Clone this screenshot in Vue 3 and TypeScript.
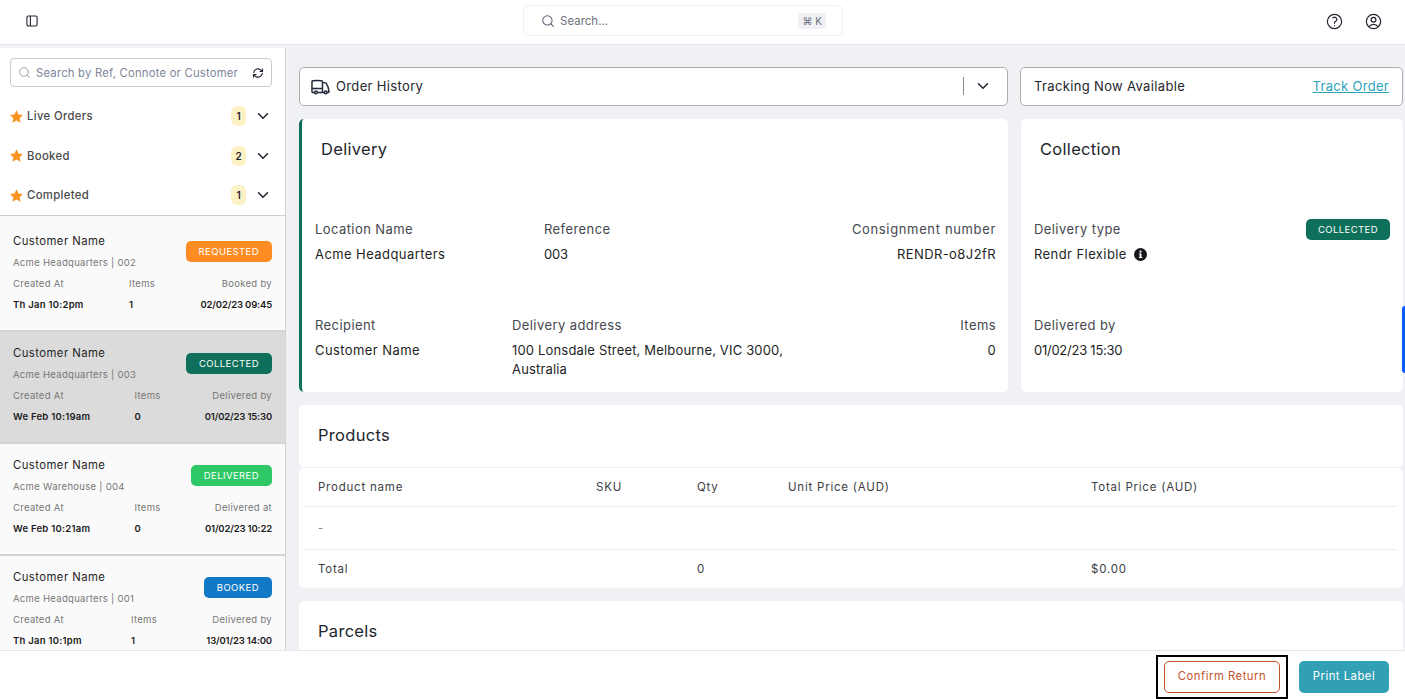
<template>
  <div class="page">
    <header class="topbar">
      <button class="panel-btn" aria-label="Toggle sidebar">
        <svg width="12" height="12" viewBox="0 0 12 12" fill="none" stroke="#1f2430" stroke-width="1.1">
          <rect x="0.9" y="1" width="10.2" height="10" rx="1.4" />
          <path d="M4.4 1v10" />
        </svg>
      </button>
      <div class="global-search">
        <svg class="global-search-icon" width="14" height="14" viewBox="0 0 24 24" fill="none" stroke="#5b6270" stroke-width="1.8" stroke-linecap="round">
          <circle cx="11" cy="11" r="8" />
          <path d="M17 17l4.5 4.5" />
        </svg>
        <span class="global-search-text">Search...</span>
        <span class="kbd">⌘ K</span>
      </div>
      <div class="top-icons">
        <svg width="19" height="19" viewBox="0 0 24 24" fill="none" stroke="#1f2430" stroke-width="1.5" stroke-linecap="round" stroke-linejoin="round">
          <path d="M9.879 7.519c1.171-1.025 3.071-1.025 4.242 0 1.172 1.025 1.172 2.687 0 3.712-.203.179-.43.326-.67.442-.745.361-1.45.999-1.45 1.827v.75M21 12a9 9 0 11-18 0 9 9 0 0118 0zm-9 5.25h.008v.008H12v-.008z" />
        </svg>
        <svg width="19" height="19" viewBox="0 0 24 24" fill="none" stroke="#1f2430" stroke-width="1.5" stroke-linecap="round" stroke-linejoin="round">
          <path d="M17.982 18.725A7.488 7.488 0 0012 15.75a7.488 7.488 0 00-5.982 2.975m11.963 0a9 9 0 10-11.963 0m11.963 0A8.966 8.966 0 0112 21a8.966 8.966 0 01-5.982-2.275M15 9.75a3 3 0 11-6 0 3 3 0 016 0z" />
        </svg>
      </div>
    </header>

    <div class="body">
      <aside class="sidebar">
        <div class="side-search">
          <svg width="13" height="13" viewBox="0 0 24 24" fill="none" stroke="#9aa0ab" stroke-width="1.8" stroke-linecap="round">
            <circle cx="11" cy="11" r="8" />
            <path d="M17 17l4.5 4.5" />
          </svg>
          <span class="side-search-text">Search by Ref, Connote or Customer</span>
          <svg width="12" height="12" viewBox="0 0 24 24" fill="none" stroke="#1f2430" stroke-width="2.4" stroke-linecap="round" stroke-linejoin="round">
            <path d="M3.5 11A8.5 8.5 0 0 1 18 6.2L20.5 9" />
            <path d="M20.5 13A8.5 8.5 0 0 1 6 17.8L3.5 15" />
            <path d="M21 4v5h-5" />
            <path d="M3 20v-5h5" />
          </svg>
        </div>

        <div class="groups">
          <div v-for="g in groups" :key="g.name" class="group">
            <svg width="13" height="13" viewBox="1 1 22 21" fill="#f7931e">
              <path d="M12 1l3.3 7.200 7.700.9-5.700 5.300 1.600 7.600L12 18.100 5.100 22l1.600-7.600L1 9.100l7.700-.9z" />
            </svg>
            <span class="group-name">{{ g.name }}</span>
            <span class="count">{{ g.count }}</span>
            <svg class="chev" width="12" height="12" viewBox="0 0 24 24" fill="none" stroke="#1f2430" stroke-width="3" stroke-linecap="round" stroke-linejoin="round">
              <path d="M3 7.500l9 9 9-9" />
            </svg>
          </div>
        </div>

        <div class="orders">
          <div v-for="o in orders" :key="o.ref" class="order" :class="{ selected: o.selected }">
            <div class="order-head">
              <div>
                <div class="order-name">{{ o.customer }}</div>
                <div class="order-loc">{{ o.location }} | {{ o.ref }}</div>
              </div>
              <span class="badge" :style="{ background: o.color }">{{ o.status }}</span>
            </div>
            <div class="order-grid">
              <div>
                <div class="order-label">Created At</div>
                <div class="order-value">{{ o.created }}</div>
              </div>
              <div>
                <div class="order-label">Items</div>
                <div class="order-value">{{ o.items }}</div>
              </div>
              <div class="right">
                <div class="order-label">{{ o.dateLabel }}</div>
                <div class="order-value order-date">{{ o.date }}</div>
              </div>
            </div>
          </div>
        </div>
      </aside>

      <main class="main">
        <div class="top-row">
          <div class="box history">
            <svg width="21" height="21" viewBox="0 0 24 24" fill="none" stroke="#1f2937" stroke-width="1.7" stroke-linecap="round" stroke-linejoin="round">
              <path d="M8.250 18.750a1.500 1.500 0 01-3 0m3 0a1.500 1.500 0 00-3 0m3 0h6m-9 0H3.375a1.125 1.125 0 01-1.125-1.125V14.250m17.250 4.500a1.500 1.500 0 01-3 0m3 0a1.500 1.500 0 00-3 0m3 0h1.125c.621 0 1.129-.504 1.090-1.124a17.902 17.902 0 00-3.213-9.193 2.056 2.056 0 00-1.580-.860H14.250M16.500 18.750h-2.250m0-11.177v-.958c0-.568-.422-1.048-.987-1.106a48.554 48.554 0 00-10.026 0 1.106 1.106 0 00-.987 1.106v7.635m12-6.677v6.677m0 4.500v-4.500m0 0h-12" />
            </svg>
            <span class="box-text">Order History</span>
            <span class="divider"></span>
            <svg width="12" height="12" viewBox="0 0 24 24" fill="none" stroke="#1f2430" stroke-width="3" stroke-linecap="round" stroke-linejoin="round">
              <path d="M3 7.500l9 9 9-9" />
            </svg>
          </div>
          <div class="box tracking">
            <span class="box-text">Tracking Now Available</span>
            <a class="track-link">Track Order</a>
          </div>
        </div>

        <div class="info-row">
          <section class="card delivery">
            <h2 class="delivery-title">Delivery</h2>
            <div class="fields fields-a">
              <div>
                <div class="label">Location Name</div>
                <div class="value">Acme Headquarters</div>
              </div>
              <div>
                <div class="label">Reference</div>
                <div class="value tight">003</div>
              </div>
              <div class="right">
                <div class="label wide">Consignment number</div>
                <div class="value">RENDR-o8J2fR</div>
              </div>
            </div>
            <div class="fields fields-b">
              <div>
                <div class="label">Recipient</div>
                <div class="value">Customer Name</div>
              </div>
              <div>
                <div class="label">Delivery address</div>
                <div class="value address">100 Lonsdale Street, Melbourne, VIC 3000, Australia</div>
              </div>
              <div class="right">
                <div class="label">Items</div>
                <div class="value">0</div>
              </div>
            </div>
          </section>

          <section class="card collection">
            <h2 class="collection-title">Collection</h2>
            <div class="collection-top">
              <div>
                <div class="label">Delivery type</div>
                <div class="value type-value">
                  Rendr Flexible
                  <svg width="13" height="13" viewBox="0 0 16 16">
                    <circle cx="8" cy="8" r="8" fill="#16171a" />
                    <rect x="7" y="7" width="2.200" height="5" fill="#fff" />
                    <rect x="6" y="11" width="4.200" height="1.300" fill="#fff" />
                    <rect x="6" y="6.800" width="2.500" height="1.200" fill="#fff" />
                    <circle cx="8" cy="4.500" r="1.300" fill="#fff" />
                  </svg>
                </div>
              </div>
              <span class="badge collected">COLLECTED</span>
            </div>
            <div class="collection-bottom">
              <div class="label">Delivered by</div>
              <div class="value tight">01/02/23 15:30</div>
            </div>
          </section>
        </div>

        <section class="card products-head">
          <h2>Products</h2>
        </section>
        <section class="card products-table">
          <div class="t-row t-head">
            <span>Product name</span><span>SKU</span><span>Qty</span><span>Unit Price (AUD)</span><span>Total Price (AUD)</span>
          </div>
          <div class="t-row t-empty"><span>-</span></div>
          <div class="t-row t-total">
            <span>Total</span><span></span><span>0</span><span></span><span>$0.00</span>
          </div>
        </section>

        <section class="card parcels">
          <h2>Parcels</h2>
        </section>

        <div class="scroll-thumb"></div>
      </main>
    </div>

    <footer class="footer">
      <span class="focus-ring">
        <button class="btn-confirm">Confirm Return</button>
      </span>
      <button class="btn-print">Print Label</button>
    </footer>
  </div>
</template>

<script setup lang="ts">
interface Order {
  customer: string;
  location: string;
  ref: string;
  status: string;
  color: string;
  created: string;
  items: number;
  dateLabel: string;
  date: string;
  selected?: boolean;
}

const groups = [
  { name: 'Live Orders', count: 1 },
  { name: 'Booked', count: 2 },
  { name: 'Completed', count: 1 },
];

const orders: Order[] = [
  { customer: 'Customer Name', location: 'Acme Headquarters', ref: '002', status: 'REQUESTED', color: '#fd8c25', created: 'Th Jan 10:2pm', items: 1, dateLabel: 'Booked by', date: '02/02/23 09:45' },
  { customer: 'Customer Name', location: 'Acme Headquarters', ref: '003', status: 'COLLECTED', color: '#0e6f5a', created: 'We Feb 10:19am', items: 0, dateLabel: 'Delivered by', date: '01/02/23 15:30', selected: true },
  { customer: 'Customer Name', location: 'Acme Warehouse', ref: '004', status: 'DELIVERED', color: '#2ec866', created: 'We Feb 10:21am', items: 0, dateLabel: 'Delivered at', date: '01/02/23 10:22' },
  { customer: 'Customer Name', location: 'Acme Headquarters', ref: '001', status: 'BOOKED', color: '#1279c6', created: 'Th Jan 10:1pm', items: 1, dateLabel: 'Delivered by', date: '13/01/23 14:00' },
];
</script>

<style>
html,
body {
  margin: 0;
  overflow: hidden;
}
</style>

<style scoped>
.page {
  height: 699px;
  display: flex;
  flex-direction: column;
  font-family: Inter, "Open Sans", sans-serif;
  color: #1f2430;
  background: #fff;
  overflow: hidden;
}

.topbar {
  height: 45px;
  flex: none;
  box-sizing: border-box;
  padding-bottom: 2px;
  display: grid;
  grid-template-columns: 523px 320px 1fr;
  align-items: center;
  border-bottom: 1px solid #e2e8f0;
  background: #fff;
}

.panel-btn {
  border: 0;
  background: none;
  padding: 0 0 0 26px;
  display: flex;
  justify-content: flex-start;
}

.global-search {
  height: 31px;
  margin-top: -1px;
  box-sizing: border-box;
  border: 1px solid #f0f1f5;
  border-radius: 5px;
  display: flex;
  align-items: center;
  padding: 0 16px 0 17px;
  gap: 5px;
}

.global-search-text {
  font-size: 11.5px;
  color: #6b7280;
  flex: 1;
}

.kbd {
  font-size: 10px;
  color: #6b7280;
  background: #f0f1f5;
  border-radius: 4px;
  padding: 2px 4px;
}

.top-icons {
  display: flex;
  justify-content: flex-end;
  gap: 20px;
  padding-right: 22px;
}

.body {
  flex: 1;
  min-height: 0;
  display: flex;
  background: #f0f1f5;
}

.sidebar {
  width: 285px;
  flex: none;
  margin-top: 3px;
  background: #fff;
  border-right: 1px solid #d4d4d4;
  overflow: hidden;
}

.side-search {
  margin: 10px 13px 0 10px;
  height: 29px;
  box-sizing: border-box;
  border: 1px solid #c9cbd0;
  border-radius: 4px;
  display: flex;
  align-items: center;
  padding: 0 7px 0 7px;
}

.side-search-text {
  flex: 1;
  margin-left: 5px;
  font-size: 11.3px;
  letter-spacing: 0.2px;
  color: #7d8599;
  white-space: nowrap;
}

.groups {
  padding: 9.4px 16px 0 10px;
}

.group {
  height: 39.5px;
  display: flex;
  align-items: center;
}

.group-name {
  margin-left: 4px;
  flex: 1;
  font-size: 11.3px;
  font-weight: 500;
  letter-spacing: 0.35px;
  color: #4a4a4a;
}

.count {
  min-width: 9px;
  padding: 0 3px;
  height: 20px;
  line-height: 20px;
  text-align: center;
  border-radius: 6px;
  background: #fdf1c6;
  font-size: 10px;
  font-weight: 600;
}

.chev {
  margin-left: 11px;
}

.orders {
  border-top: 1px solid #cfcfcf;
}

.order {
  height: 112px;
  box-sizing: border-box;
  padding: 12px 13px 0 13px;
  background: #fafafa;
  border-bottom: 2px solid #d4d4d4;
}

.order:first-child {
  height: 116px;
  padding-top: 16px;
}

.order.selected {
  background: #dbdbdb;
}

.order-head {
  display: flex;
  justify-content: space-between;
  align-items: center;
}

.order-name {
  font-size: 11.3px;
  line-height: 18px;
  letter-spacing: 0.45px;
  color: #1f1f1f;
}

.order-loc {
  margin-top: 5px;
  font-size: 9.5px;
  line-height: 16px;
  letter-spacing: 0.3px;
  color: #777;
}

.badge {
  display: inline-block;
  padding: 0 13px;
  height: 21px;
  line-height: 21px;
  border-radius: 5px;
  font-size: 9.5px;
  letter-spacing: 0.42px;
  color: #fff;
  white-space: nowrap;
}

.badge.collected {
  margin-top: -1px;
  padding: 0 12px;
  background: #0e6f5a;
  flex: none;
}

.order-grid {
  margin-top: 5px;
  display: flex;
  justify-content: space-between;
}

.order-label {
  font-size: 9.5px;
  line-height: 16px;
  letter-spacing: 0.3px;
  color: #777;
}

.order-value {
  margin-top: 5px;
  font-size: 9.5px;
  line-height: 16px;
  font-weight: 600;
  letter-spacing: 0.25px;
  color: #1a1a1a;
  white-space: nowrap;
}

.order-date {
  letter-spacing: -0.15px;
}

.right {
  text-align: right;
}

.main {
  position: relative;
  flex: 1;
  min-width: 0;
  overflow: hidden;
  padding: 22px 2px 0 13px;
  box-sizing: border-box;
}

.top-row {
  display: flex;
  gap: 12px;
  height: 39px;
}

.box {
  box-sizing: border-box;
  background: #fff;
  border: 1px solid #adadad;
  border-radius: 5px;
  display: flex;
  align-items: center;
}

.history {
  width: 709px;
  padding: 0 18px 1px 10px;
}

.tracking {
  flex: 1;
  padding: 0 13px 1px;
  justify-content: space-between;
}

.box-text {
  font-size: 13px;
  letter-spacing: 0.35px;
  color: #24262b;
}

.history .box-text {
  flex: 1;
  margin-left: 5px;
}

.divider {
  width: 1px;
  height: 18px;
  background: #8a8a8a;
  margin-right: 13px;
}

.track-link {
  font-size: 13px;
  letter-spacing: 0.3px;
  color: #2ba3bd;
  text-decoration: underline;
}

.card {
  background: #fff;
  border-radius: 5px;
  box-sizing: border-box;
}

.info-row {
  margin-top: 13px;
  display: flex;
  gap: 13px;
  height: 273px;
}

h2 {
  margin: 0;
  font-size: 16.5px;
  line-height: 20px;
  font-weight: 400;
  letter-spacing: 0.3px;
  color: #23252b;
}

.delivery {
  width: 709px;
  border-left: 3px solid #0e6f5a;
  padding: 20px 12px 0 13px;
}

.delivery-title {
  margin-left: 6px;
}

.fields {
  display: grid;
}

.fields-a {
  margin-top: 61px;
  grid-template-columns: 229px 1fr auto;
}

.fields-b {
  margin-top: 52px;
  grid-template-columns: 197px 290px 1fr;
}

.label {
  font-size: 13px;
  line-height: 19px;
  letter-spacing: 0.42px;
  color: #45484f;
}

.label.wide {
  letter-spacing: 0.65px;
}

.value {
  margin-top: 6px;
  font-size: 13px;
  line-height: 19px;
  font-weight: 420;
  letter-spacing: 0.42px;
  color: #1d1f24;
}

.tight {
  letter-spacing: -0.25px;
}

.address {
  letter-spacing: 0.17px;
}

.collection {
  flex: 1;
  padding: 20px 13px 0 13px;
}

.collection-title {
  margin-left: 6px;
}

.collection-top {
  margin-top: 61px;
  display: flex;
  justify-content: space-between;
  align-items: flex-start;
}

.type-value {
  display: flex;
  align-items: center;
  gap: 7px;
}

.collection-bottom {
  margin-top: 52px;
}

.products-head {
  margin-top: 13px;
  height: 62px;
  padding: 20px 19px 0;
}

.products-table {
  margin-top: 1px;
  height: 120px;
  padding: 0 6px 0 5px;
}

.t-row {
  display: grid;
  grid-template-columns: 278px 101px 91px 303px 1fr;
  padding-left: 14px;
  align-items: center;
  font-size: 11.5px;
  letter-spacing: 0.78px;
  color: #3c3e44;
}

.t-head {
  height: 38px;
  border-bottom: 1px solid #eceef2;
}

.t-empty {
  height: 42px;
  border-bottom: 1px solid #eceef2;
  color: #8a8a8a;
}

.t-total {
  height: 38px;
}

.parcels {
  margin-top: 13px;
  height: 120px;
  padding: 20px 19px 0;
}

.scroll-thumb {
  position: absolute;
  right: 0;
  top: 261px;
  width: 3px;
  height: 67px;
  border-radius: 3px 0 0 3px;
  background: #0a5cff;
}

.footer {
  height: 49px;
  flex: none;
  box-sizing: border-box;
  border-top: 1px solid #e2e8f0;
  background: #fff;
  display: flex;
  justify-content: flex-end;
  align-items: center;
  gap: 11px;
  padding: 3px 16px 0 0;
}

.focus-ring {
  display: flex;
  padding: 4px 6px;
  border: 2px solid #000;
}

.footer button {
  height: 32px;
  box-sizing: border-box;
  border-radius: 5px;
  padding-bottom: 3px;
  font-family: inherit;
  font-size: 11.3px;
  letter-spacing: 0.5px;
}

.btn-confirm {
  width: 116px;
  background: #fff;
  border: 1px solid #c2522a;
  color: #c2522a;
}

.btn-print {
  width: 90px;
  border: 0;
  background: #319fb5;
  color: #fff;
}
</style>
